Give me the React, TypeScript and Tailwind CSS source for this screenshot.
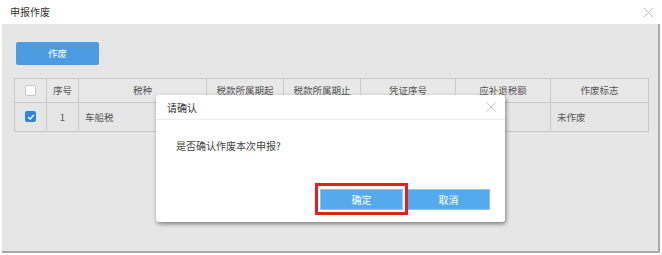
import { X } from "lucide-react";

const cols = [
  { key: "check", label: "", w: "w-[32px]" },
  { key: "xh", label: "序号", w: "w-[32px]" },
  { key: "sz", label: "税种", w: "w-[128px]" },
  { key: "qq", label: "税款所属期起", w: "w-[77px]" },
  { key: "qz", label: "税款所属期止", w: "w-[77px]" },
  { key: "pz", label: "凭证序号", w: "w-[95px]" },
  { key: "ybt", label: "应补退税额", w: "w-[95px]" },
  { key: "zf", label: "作废标志", w: "w-[98px]" },
];

function CheckBox({ checked }: { checked?: boolean }) {
  if (checked) {
    return (
      <span className="inline-flex w-[11px] h-[11px] items-center justify-center rounded-[2px] bg-[#2f86d6]">
        <svg viewBox="0 0 10 10" className="w-[8px] h-[8px]">
          <path d="M1.5 5.2 L4 7.5 L8.5 2.5" fill="none" stroke="white" strokeWidth="1.6" />
        </svg>
      </span>
    );
  }
  return <span className="inline-block w-[11px] h-[11px] rounded-[2px] border border-[#c4c4c4] bg-white" />;
}

export default function App() {
  return (
    <div
      className="relative w-[662px] h-[255px] bg-white text-[#333] overflow-hidden"
      style={{ fontFamily: '"Noto Sans CJK SC", "Noto Sans", sans-serif' }}
    >
      {/* window header */}
      <div className="flex items-center justify-between h-[24px] pl-[10px] pr-[5px]">
        <span className="text-[10px] text-[#333] leading-none">申报作废</span>
        <X className="w-[17px] h-[17px] text-[#b0b0b0]" strokeWidth={1.1} />
      </div>

      {/* body */}
      <div className="ml-[2px] w-[658px] h-[229px] bg-[#e6e6e6] border-r-2 border-b-2 border-[#a8a8a8] pt-[14px] pl-[12px]">
        <button className="w-[83px] h-[23px] rounded-[2px] bg-[#4b9ce0] text-white text-[9.5px] ml-[2px]">
          作废
        </button>

        <table className="mt-[13px] border-collapse table-fixed text-[9.5px] text-[#555]">
          <thead>
            <tr className="h-[24px]">
              {cols.map((c) => (
                <th key={c.key} className={`${c.w} border border-[#c9c9c9] font-normal text-center p-0 bg-[#e8e8e8]`}>
                  {c.key === "check" ? (
                    <span className="flex justify-center">
                      <CheckBox />
                    </span>
                  ) : (
                    c.label
                  )}
                </th>
              ))}
            </tr>
          </thead>
          <tbody>
            <tr className="h-[29px]">
              <td className="border border-[#c9c9c9] p-0">
                <span className="flex justify-center">
                  <CheckBox checked />
                </span>
              </td>
              <td className="border border-[#c9c9c9] text-center p-0">1</td>
              <td className="border border-[#c9c9c9] pl-[6px] p-0">车船税</td>
              <td className="border border-[#c9c9c9]" />
              <td className="border border-[#c9c9c9]" />
              <td className="border border-[#c9c9c9]" />
              <td className="border border-[#c9c9c9]" />
              <td className="border border-[#c9c9c9] pl-[6px] p-0">未作废</td>
            </tr>
          </tbody>
        </table>
      </div>

      {/* confirm dialog */}
      <div className="absolute left-[156px] top-[95px] w-[349px] h-[127px] bg-white rounded-[3px] shadow-[1px_2px_4px_rgba(0,0,0,0.45)] flex flex-col">
        <div className="flex items-center justify-between h-[25px] pl-[11px] pr-[5px] border-b border-[#eeeeee]">
          <span className="text-[10px] text-[#333]">请确认</span>
          <X className="w-[18px] h-[18px] text-[#b8b8b8]" strokeWidth={1.1} />
        </div>
        <div className="pl-[20px] pt-[18px] text-[10px] text-[#444]">是否确认作废本次申报?</div>
        <div className="mt-auto mb-[12px] flex justify-end gap-[4px] pr-[15px]">
          <div className="relative">
            <button className="w-[83px] h-[21px] bg-[#55aaee] text-white text-[10px] border border-[#8cc6f2] block">
              确定
            </button>
            {/* highlight frame */}
            <div className="absolute -left-[5px] -right-[5px] -top-[6px] -bottom-[5px] border-[3px] border-[#e3201b] pointer-events-none" />
          </div>
          <button className="w-[83px] h-[21px] bg-[#55aaee] text-white text-[10px] border border-[#8cc6f2]">
            取消
          </button>
        </div>
      </div>
    </div>
  );
}
